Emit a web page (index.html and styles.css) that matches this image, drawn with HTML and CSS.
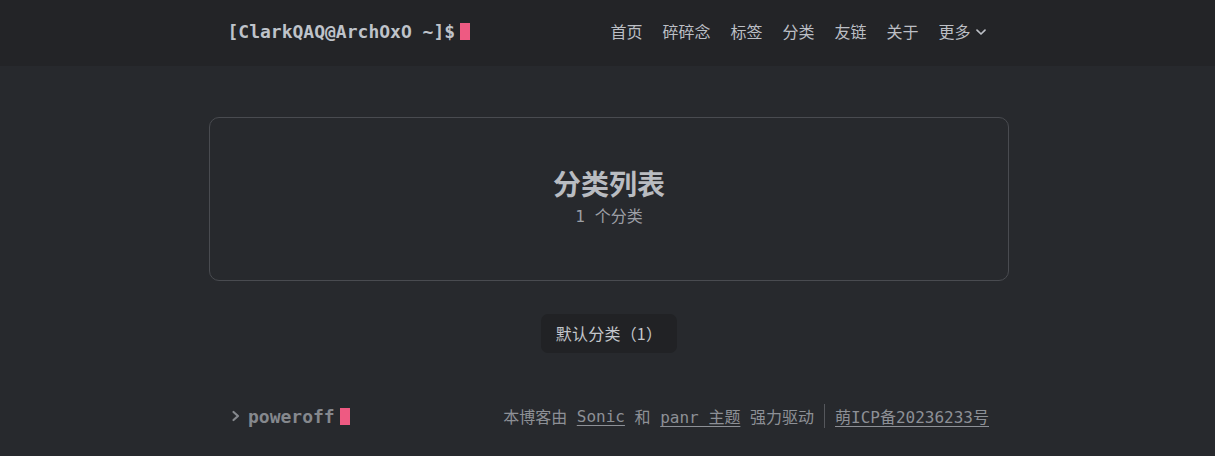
FILE: index.html
```html
<!DOCTYPE html>
<html lang="zh-CN">
<head>
<meta charset="utf-8">
<link rel="stylesheet" href="styles.css">
</head>
<body>
<div class="page">
  <header class="header">
    <div class="header-inner">
      <a class="brand">[ClarkQAQ@ArchOxO ~]$<span class="cursor"></span></a>
      <nav class="nav">
        <a>首页</a><a>碎碎念</a><a>标签</a><a>分类</a><a>友链</a><a>关于</a>
        <a class="more">更多<svg width="12" height="12" viewBox="0 0 12 12"><path d="M2 4.2 L6 8 L10 4.2" fill="none" stroke="currentColor" stroke-width="1.7" stroke-linecap="round" stroke-linejoin="round"/></svg></a>
      </nav>
    </div>
  </header>
  <main class="main">
    <section class="card">
      <h1 class="title">分类列表</h1>
      <p class="subtitle">1 个分类</p>
    </section>
    <div class="tags">
      <a class="tag">默认分类（1）</a>
    </div>
  </main>
  <footer class="footer">
    <div class="footer-inner">
      <div class="poweroff"><svg class="chev" width="10" height="12" viewBox="0 0 10 12"><path d="M2.5 2 L7 6 L2.5 10" fill="none" stroke="currentColor" stroke-width="2.2" stroke-linecap="round" stroke-linejoin="round"/></svg>poweroff<span class="cursor small"></span></div>
      <div class="copy">本博客由 <a>Sonic</a> 和 <a>panr 主题</a> 强力驱动<span class="sep"></span><a>萌ICP备20236233号</a></div>
    </div>
  </footer>
</div>
</body>
</html>
```
FILE: styles.css
```css
* { box-sizing: border-box; }
html, body { margin: 0; padding: 0; }
body {
  background: #27292d;
  color: #b6b9bf;
  font-family: "DejaVu Sans Mono", "Noto Sans CJK SC", monospace;
  font-size: 16px;
  height: 456px;
  overflow: hidden;
}
a { color: inherit; text-decoration: none; }
.page { height: 456px; padding-left: 3px; }
.header { background: #232427; height: 66px; margin-left: -3px; }
.header-inner {
  width: 800px; margin: 0 auto; height: 100%;
  padding: 0 20px 4px;
  display: flex; align-items: center; justify-content: space-between;
}
.brand {
  font-family: "DejaVu Sans Mono", monospace;
  font-weight: bold; font-size: 18px; color: #bfc3ca;
  display: flex; align-items: center;
}
.cursor {
  display: inline-block; width: 10px; height: 17px;
  background: #ee5a82; margin-left: 5px;
}
.nav { display: flex; align-items: center; gap: 20px; margin-right: 1px; }
.nav a { font-family: "Noto Sans CJK SC", sans-serif; font-size: 16px; color: #bcbfc5; }
.more { display: flex; align-items: center; gap: 4px; }
.more svg { margin-top: 1px; }
.main { width: 800px; margin: 0 auto; padding-top: 51px; }
.card {
  border: 1px solid #494b50; border-radius: 10px;
  height: 164px;
  display: flex; flex-direction: column; align-items: center; justify-content: center;
  padding-bottom: 6px;
}
.title {
  font-family: "Noto Sans CJK SC", sans-serif; font-weight: bold;
  font-size: 28px; line-height: 38px; margin: 0; color: #b9bcc1;
}
.subtitle {
  margin: 3px 0 0; font-size: 16px; line-height: 24px; color: #9c9fa5;
  font-family: "DejaVu Sans Mono", "Noto Sans CJK SC", monospace;
}
.tags { display: flex; justify-content: center; padding-top: 33px; }
.tag {
  background: #212225; border-radius: 7px;
  height: 39px; padding: 0 15px 2px;
  display: flex; align-items: center;
  font-family: "Noto Sans CJK SC", sans-serif;
  font-size: 16px; color: #c4c7cc; letter-spacing: 0.2px;
}
.footer { margin-top: 51px; }
.footer-inner {
  width: 800px; margin: 0 auto; padding: 0 20px 0 22px;
  display: flex; align-items: center; justify-content: space-between;
}
.poweroff {
  font-weight: bold; color: #85888d; font-size: 18px;
  display: flex; align-items: center;
}
.chev { margin-right: 7px; }
.cursor.small { height: 17px; width: 10px; margin-left: 5px; }
.copy { color: #8d9096; font-size: 16px; display: flex; align-items: center; white-space: pre; }
.copy a { text-decoration: underline; text-underline-offset: 3px; }
.sep { display: inline-block; width: 1px; height: 24px; background: #55575c; margin: 0 10px; }
```
